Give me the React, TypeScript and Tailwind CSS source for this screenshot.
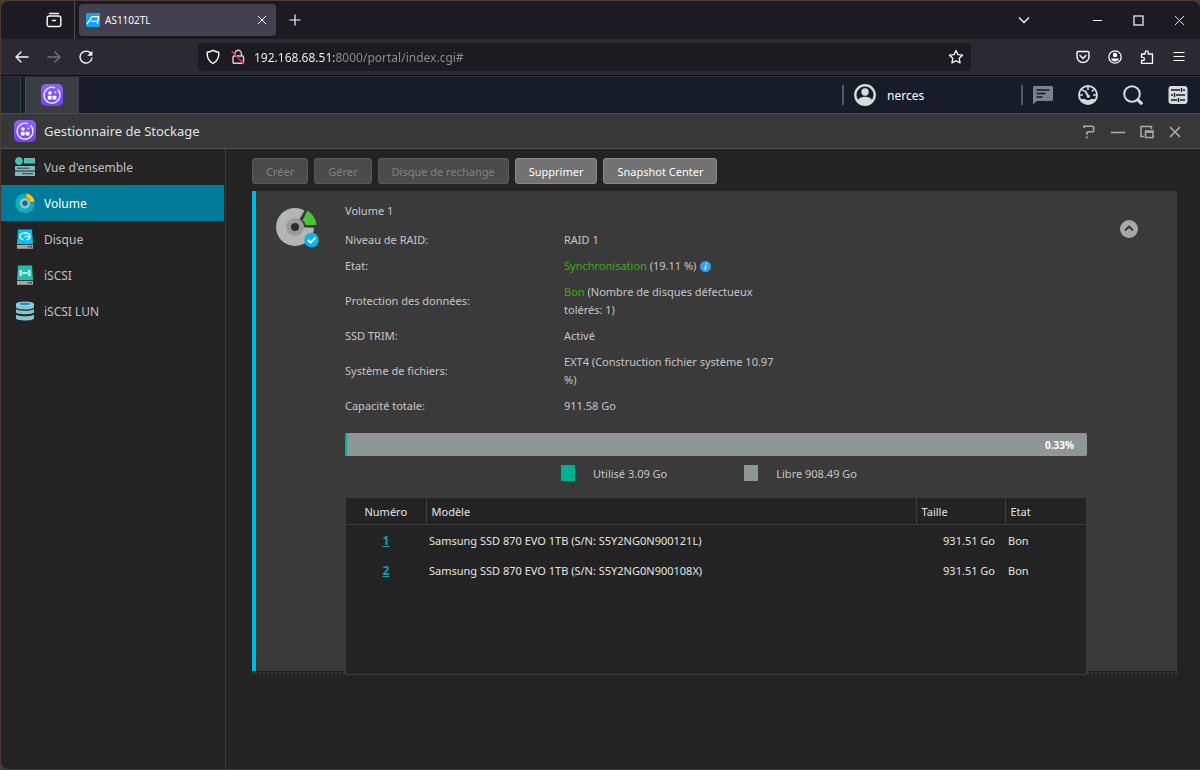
import { useState } from 'react'
import type { ReactNode } from 'react'

interface NavItem {
  id: string
  label: string
  icon: ReactNode
}

interface Disk {
  id: number
  model: string
  size: string
  state: string
}

const disks: Disk[] = [
  { id: 1, model: 'Samsung SSD 870 EVO 1TB (S/N: S5Y2NG0N900121L)', size: '931.51 Go', state: 'Bon' },
  { id: 2, model: 'Samsung SSD 870 EVO 1TB (S/N: S5Y2NG0N900108X)', size: '931.51 Go', state: 'Bon' },
]

const actions = [
  { label: 'Créer', disabled: true },
  { label: 'Gérer', disabled: true },
  { label: 'Disque de rechange', disabled: true },
  { label: 'Supprimer', disabled: false },
  { label: 'Snapshot Center', disabled: false },
]

function StorageIcon() {
  return (
    <svg viewBox="0 0 22 22" className="size-[22px] shrink-0">
      <defs>
        <linearGradient id="storage" x1="0" y1="0" x2="0" y2="1">
          <stop offset="0" stopColor="#8a63f5" />
          <stop offset="1" stopColor="#6f45ee" />
        </linearGradient>
      </defs>
      <rect width="22" height="22" rx="5" fill="url(#storage)" />
      <path d="M13.5 3.6A8 8 0 1 0 19 11a8 8 0 0 0-2-5.2" fill="none" stroke="#f1ecff" strokeWidth="1.4" strokeLinecap="round" />
      <circle cx="9" cy="9" r="1.8" fill="#fff" />
      <rect x="13.5" y="7.5" width="1.8" height="1.8" rx=".5" fill="#fff" />
      <rect x="6.8" y="11.8" width="3.9" height="3.7" rx=".7" fill="#fff" />
      <rect x="11.6" y="11.8" width="3.9" height="3.7" rx=".7" fill="#fff" />
    </svg>
  )
}

function OverviewIcon() {
  return (
    <svg viewBox="0 0 20 20" className="size-5">
      <circle cx="4" cy="4" r="3.4" fill="#22d3b0" stroke="#7fb0b8" strokeWidth="1" />
      <rect x="9.5" y="1.5" width="10" height="4.5" fill="#22d3b0" stroke="#7fb0b8" />
      <rect x="0" y="9" width="20" height="4.5" rx=".6" fill="#8ab6bf" />
      <rect x="2" y="10.7" width="12" height="1" fill="#26424a" />
      <rect x="0" y="14.5" width="20" height="4.5" rx=".6" fill="#8ab6bf" />
      <rect x="7" y="16.2" width="11" height="1" fill="#26424a" />
    </svg>
  )
}

function VolumeIcon() {
  return (
    <svg viewBox="0 0 20 20" className="size-5">
      <circle cx="10" cy="10.3" r="9.7" fill="#00b4c0" />
      <path d="M10.8 0A9.7 9.7 0 0 1 20 9.4h-4.8A5 5 0 0 0 10.8 5z" fill="#ffc400" stroke="#007a99" strokeWidth=".8" />
      <circle cx="10" cy="10.3" r="4" fill="#007a99" stroke="#a9bcc4" strokeWidth="2.6" />
    </svg>
  )
}

function DiskIcon() {
  return (
    <svg viewBox="0 0 20 20" className="size-5">
      <path d="M3 .5h14l1 14.5H2z" fill="#00c3f5" />
      <rect x="2" y="15.8" width="16" height="4" fill="#a5a5a5" />
      <path d="M13 17h1.5v1.5H13zM15.5 17H17v1.5h-1.5z" fill="#333" />
      <path d="M8.5 10.7C6 10.5 5 9 5 7.500 5 5.500 7 4 10 4s5 1.500 5 3.500-1.500 3-3.500 3M14 7.500H9.500" fill="none" stroke="#e8fbff" strokeWidth="1.3" />
    </svg>
  )
}

function IscsiIcon() {
  return (
    <svg viewBox="0 0 20 20" className="size-5">
      <path d="M3 .5h14l1 14.5H2z" fill="#1fbfb0" />
      <rect x="2" y="15.8" width="16" height="4" fill="#a5a5a5" />
      <path d="M13 17h1.500v1.500H13zM15.500 17H17v1.500h-1.500z" fill="#333" />
      <path d="M7 6H5.200v4H7M13 6h1.800v4H13M6.500 8h7" fill="none" stroke="#e6fffb" strokeWidth="1.3" />
    </svg>
  )
}

function LunIcon() {
  return (
    <svg viewBox="0 0 20 20" className="size-5">
      <path d="M1 3v3.200c0 3 18 3 18 0V3z" fill="#86c3cb" />
      <ellipse cx="10" cy="3" rx="9" ry="2.500" fill="#9ed3da" />
      <ellipse cx="10" cy="2.900" rx="6" ry="1.300" fill="#2f86c6" />
      <path d="M1 8c2 2.300 16 2.300 18 0v3.300c0 2.600-18 2.600-18 0zM1 13.500c2 2.300 16 2.300 18 0v3.800c0 3-18 3-18 0z" fill="#86c3cb" />
    </svg>
  )
}

const navItems: NavItem[] = [
  { id: 'overview', label: "Vue d'ensemble", icon: <OverviewIcon /> },
  { id: 'volume', label: 'Volume', icon: <VolumeIcon /> },
  { id: 'disk', label: 'Disque', icon: <DiskIcon /> },
  { id: 'iscsi', label: 'iSCSI', icon: <IscsiIcon /> },
  { id: 'lun', label: 'iSCSI LUN', icon: <LunIcon /> },
]

function IconButton({ label, children, className = '' }: { label: string; children: ReactNode; className?: string }) {
  return (
    <button aria-label={label} className={`flex shrink-0 items-center justify-center ${className}`}>
      {children}
    </button>
  )
}

function TabBar() {
  return (
    <div className="flex h-[38px] items-center rounded-t-lg bg-[#1c1b22] text-[#fbfbfe]">
      <div className="flex h-full w-[74px] items-center justify-end border-r border-[#4a4954] pr-3">
        <IconButton label="Firefox View">
          <svg viewBox="0 0 16 16" className="size-4" fill="none" stroke="currentColor" strokeWidth="1.4">
            <path d="M3.500 1.500h9" strokeLinecap="round" />
            <rect x="1.200" y="4" width="13.600" height="10.500" rx="2" />
            <path d="M6.500 8.500h3" strokeLinecap="round" />
          </svg>
        </IconButton>
      </div>
      <div className="ml-1 flex h-8 w-[197px] items-center rounded bg-[#42414d] pl-[7px] shadow">
        <svg viewBox="0 0 14 14" className="size-3.5">
          <rect width="14" height="14" rx="1" fill="#18a0f5" />
          <path d="M.8 11.200 6 3.700h6.700L11.300 11.200M4.600 8.400h6.800" fill="none" stroke="#fff" strokeWidth="1.300" />
        </svg>
        <span className="ml-[5px] grow text-[10px]">AS1102TL</span>
        <IconButton label="Fermer l'onglet" className="mr-[9px]">
          <svg viewBox="0 0 10 10" className="size-2.5" stroke="currentColor" strokeWidth="1">
            <path d="m1 1 8 8M9 1 1 9" />
          </svg>
        </IconButton>
      </div>
      <IconButton label="Nouvel onglet" className="ml-[13px]">
        <svg viewBox="0 0 12 12" className="size-3" stroke="currentColor" strokeWidth="1.200">
          <path d="M6 .5v11M.5 6h11" />
        </svg>
      </IconButton>
      <IconButton label="Lister les onglets" className="ml-auto">
        <svg viewBox="0 0 12 12" className="size-3" fill="none" stroke="currentColor" strokeWidth="1.300">
          <path d="m1 3.500 5 5 5-5" />
        </svg>
      </IconButton>
      <IconButton label="Réduire" className="ml-[62px]">
        <svg viewBox="0 0 11 11" className="size-[11px]" stroke="currentColor">
          <path d="M1 5.500h9" />
        </svg>
      </IconButton>
      <IconButton label="Agrandir" className="ml-[30px]">
        <svg viewBox="0 0 11 11" className="size-[11px]" fill="none" stroke="currentColor" strokeWidth="1.200">
          <rect x="1" y="1" width="9" height="9" />
        </svg>
      </IconButton>
      <IconButton label="Fermer" className="mr-[15px] ml-[30px]">
        <svg viewBox="0 0 11 11" className="size-[11px]" stroke="currentColor" strokeWidth=".9">
          <path d="m1 1 9 9M10 1l-9 9" />
        </svg>
      </IconButton>
    </div>
  )
}

function AddressBar() {
  return (
    <div className="flex h-9 items-center bg-[#2b2a33] text-[#fbfbfe]">
      <IconButton label="Précédent" className="ml-3.5">
        <svg viewBox="0 0 14 14" className="size-3.5" fill="none" stroke="currentColor" strokeWidth="1.400" strokeLinecap="round" strokeLinejoin="round">
          <path d="M13 7H1M6 2 1 7l5 5" />
        </svg>
      </IconButton>
      <IconButton label="Suivant" className="ml-[18px] text-[#74737c]">
        <svg viewBox="0 0 14 14" className="size-3.5" fill="none" stroke="currentColor" strokeWidth="1.400" strokeLinecap="round" strokeLinejoin="round">
          <path d="M1 7h12M8 2l5 5-5 5" />
        </svg>
      </IconButton>
      <IconButton label="Actualiser" className="ml-[18px]">
        <svg viewBox="0 0 14 14" className="size-3.5" fill="none" stroke="currentColor" strokeWidth="1.300" strokeLinecap="round">
          <path d="M13 8A6 6 0 1 1 11.500 3" />
          <path d="M13.300.8v5h-5z" fill="currentColor" stroke="none" />
        </svg>
      </IconButton>
      <div className="ml-[105px] flex h-7 min-w-0 grow items-center rounded bg-[#1c1b22] px-[7px]">
        <svg viewBox="0 0 16 16" className="size-4 shrink-0" fill="none" stroke="currentColor" strokeWidth="1.400">
          <path d="M8 1.300c2 1.200 3.800 1.600 5.800 1.900.300 5-1 8.800-5.800 11.300C3.200 12 1.900 8.200 2.200 3.200 4.200 2.900 6 2.500 8 1.300z" strokeLinejoin="round" />
        </svg>
        <svg viewBox="0 0 16 16" className="ml-[9px] size-4 shrink-0" fill="none" stroke="#d0d0d4" strokeWidth="1.400">
          <path d="M5 7V4.500a3.200 3.200 0 0 1 6.400 0V7" />
          <rect x="3" y="7" width="10.500" height="7.300" rx="1" />
          <path d="m1.500 2 12.500 13" stroke="#e22850" strokeWidth="1.600" />
        </svg>
        <input
          aria-label="Adresse"
          defaultValue="192.168.68.51:8000/portal/index.cgi#"
          className="ml-2 min-w-0 grow bg-[linear-gradient(to_right,#fbfbfe_80px,#8f8e98_80px)] bg-clip-text pt-0.5 text-xs text-transparent caret-white outline-none"
        />
        <IconButton label="Marquer cette page">
          <svg viewBox="0 0 16 16" className="size-4" fill="none" stroke="currentColor" strokeWidth="1.300" strokeLinejoin="round">
            <path d="m8 1.500 2 4.100 4.600.6-3.400 3.100.9 4.600L8 11.700l-4.100 2.200.9-4.600L1.400 6.200 6 5.600z" />
          </svg>
        </IconButton>
      </div>
      <div className="mr-3.5 ml-[105px] flex items-center gap-[18px]">
        <IconButton label="Pocket">
          <svg viewBox="0 0 14 14" className="size-3.5" fill="none" stroke="currentColor" strokeWidth="1.400" strokeLinecap="round">
            <path d="M2 1.500h10a1 1 0 0 1 1 1v4a6 6 0 0 1-12 0v-4a1 1 0 0 1 1-1z" />
            <path d="m4 5.500 3 3 3-3" />
          </svg>
        </IconButton>
        <IconButton label="Compte">
          <svg viewBox="0 0 14 14" className="size-3.5" fill="currentColor">
            <circle cx="7" cy="7" r="6.200" fill="none" stroke="currentColor" strokeWidth="1.300" />
            <circle cx="7" cy="5" r="2.200" />
            <path d="M3 8.500h8c-.5 2-2 3-4 3s-3.500-1-4-3z" />
          </svg>
        </IconButton>
        <IconButton label="Extensions">
          <svg viewBox="0 0 14 14" className="size-3.5" fill="none" stroke="currentColor" strokeWidth="1.300" strokeLinejoin="round">
            <path d="M1.500 4h3.700V2.300a1.500 1.500 0 0 1 3 0V4H12.500v9.300h-11V10.500h1.300a1.500 1.500 0 0 0 0-3.200H1.500z" />
          </svg>
        </IconButton>
        <IconButton label="Menu">
          <svg viewBox="0 0 14 14" className="size-3.5" stroke="currentColor" strokeWidth="1.200">
            <path d="M1.500 2.500h11M1.500 6.500h11M1.500 10.500h11" />
          </svg>
        </IconButton>
      </div>
    </div>
  )
}

function Taskbar() {
  return (
    <div className="flex h-[38px] items-center border-y border-t-[#2a3038] border-b-[#4a4b4d] bg-[#161d28] text-[#d8dadc]">
      <div className="h-full w-5 border-r border-[#3a4148] bg-[#1f272f]" />
      <button aria-label="Gestionnaire de Stockage" className="ml-1 flex h-full w-[54px] items-center justify-center border-l border-[#4b4f55] bg-[#3a3e44] pr-0.5">
        <StorageIcon />
      </button>
      <div className="ml-auto flex h-5 w-[179px] items-center border-l-2 border-[#565a60] pl-2.5">
        <svg viewBox="0 0 22 22" className="size-[22px]">
          <circle cx="11" cy="11" r="9.700" fill="none" stroke="currentColor" strokeWidth="2.400" />
          <circle cx="11" cy="8" r="3.700" fill="currentColor" />
          <path d="M3.500 17c1-3 4-4.300 7.500-4.300s6.500 1.300 7.500 4.300a9.500 9.500 0 0 1-15 0z" fill="currentColor" />
        </svg>
        <span className="ml-[11px] pt-0.5 text-xs text-white">nerces</span>
      </div>
      <div className="mr-3 flex h-5 items-center gap-[25px] border-l-2 border-[#565a60] pl-2.5">
        <IconButton label="Notifications">
          <svg viewBox="0 0 20 20" className="size-5" fill="#7b818b">
            <path d="M1.500 1h17A1.500 1.500 0 0 1 20 2.500v12a1.500 1.500 0 0 1-1.500 1.500H4l-4 3.500v-17A1.500 1.500 0 0 1 1.500 1z" />
            <path d="M3.500 5h13M3.500 8.500h9M3.500 12h6" stroke="#161d28" strokeWidth="1.500" />
          </svg>
        </IconButton>
        <IconButton label="Moniteur d'activité">
          <svg viewBox="0 0 20 20" className="size-5" fill="none" stroke="currentColor">
            <circle cx="10" cy="10" r="9" strokeWidth="1.900" />
            <path d="M10 1.500V5M2 10h3M15 10h3M4.200 4.700l2 1.800M15.800 4.700l-2 1.800" strokeWidth="1.600" />
            <path d="M7 5.500 10 11" strokeWidth="2" />
            <path d="M3 14.500h4.500l1 1h3l1-1H17A8.500 8.500 0 0 1 3 14.500z" fill="currentColor" />
            <circle cx="10.300" cy="11.300" r="1.200" fill="currentColor" />
          </svg>
        </IconButton>
        <IconButton label="Rechercher">
          <svg viewBox="0 0 20 20" className="size-5" fill="none" stroke="currentColor" strokeWidth="2">
            <circle cx="9" cy="9" r="7.800" />
            <path d="m14.800 14.800 3.400 3.400" strokeWidth="3.200" strokeLinecap="round" />
          </svg>
        </IconButton>
        <IconButton label="Préférences">
          <svg viewBox="0 0 20 20" className="size-5">
            <rect x=".5" y="1" width="19" height="18" rx="3" fill="currentColor" />
            <path d="M3 5h9M15 5h2M3 10h2M8 10h9M3 15h6M12 15h5M13.500 3v4M6.500 8v4M10.500 13v4" stroke="#161d28" strokeWidth="1.400" />
          </svg>
        </IconButton>
      </div>
    </div>
  )
}

function TitleBar() {
  return (
    <div className="flex h-[35px] items-center border-b border-[#505254] bg-[#37383a] pr-[19px] pl-[13px] text-[#a9abad]">
      <StorageIcon />
      <h1 className="ml-2 text-[13px] text-[#e2e2e2]">Gestionnaire de Stockage</h1>
      <div className="ml-auto flex items-center gap-[15px] pt-0.5">
        <IconButton label="Aide">
          <svg viewBox="0 0 14 14" className="size-3.5" fill="none" stroke="currentColor" strokeWidth="1.600">
            <path d="M2 3V1.300h8.500a1.200 1.200 0 0 1 1.200 1.200v3a1.200 1.200 0 0 1-1.200 1.200H6a1.200 1.200 0 0 0-1.200 1.200v2M4.800 11.500v1.800" />
          </svg>
        </IconButton>
        <IconButton label="Réduire la fenêtre">
          <svg viewBox="0 0 14 14" className="size-3.5" stroke="currentColor" strokeWidth="1.600">
            <path d="M0 7.500h14" />
          </svg>
        </IconButton>
        <IconButton label="Restaurer la fenêtre">
          <svg viewBox="0 0 14 14" className="size-3.5" fill="none" stroke="currentColor" strokeWidth="1.500">
            <path d="M4 11.500H1V1.500h10.500V4" />
            <rect x="5.500" y="6" width="7.500" height="6.500" />
            <path d="M5.500 7.200H13" />
          </svg>
        </IconButton>
        <IconButton label="Fermer la fenêtre">
          <svg viewBox="0 0 12 12" className="size-3" stroke="currentColor" strokeWidth="1.600">
            <path d="m1 1 10 10M11 1 1 11" />
          </svg>
        </IconButton>
      </div>
    </div>
  )
}

function DetailRow({ label, children }: { label: string; children: ReactNode }) {
  return (
    <div className="flex items-center py-1">
      <dt className="w-[219px] shrink-0">{label}</dt>
      <dd>{children}</dd>
    </div>
  )
}

function DiskTable() {
  return (
    <div className="-mb-1 min-h-[178px] border border-[#3e3e3e] bg-[#232323] text-[#e4e4e4]">
      <table className="w-full table-fixed">
        <colgroup>
          <col className="w-20" />
          <col />
          <col className="w-[89px]" />
          <col className="w-[81px]" />
        </colgroup>
        <thead>
          <tr className="h-[26px] border-b border-[#3e3e3e] text-left">
            <th className="border-r border-[#3e3e3e] pt-0.5 text-center font-normal">Numéro</th>
            <th className="border-r border-[#3e3e3e] pt-0.5 pl-[5px] font-normal">Modèle</th>
            <th className="border-r border-[#3e3e3e] pt-0.5 pl-[5px] font-normal">Taille</th>
            <th className="pt-0.5 pl-[5px] font-normal">Etat</th>
          </tr>
        </thead>
        <tbody>
          {disks.map((disk) => (
            <tr key={disk.id} className="h-[30px]">
              <td className="pt-1 text-center">
                <a href="#" className="text-xs font-bold text-[#1f9ab0] underline">
                  {disk.id}
                </a>
              </td>
              <td className="pt-1 pl-[3px]">{disk.model}</td>
              <td className="pt-1 pr-2.5 text-right">{disk.size}</td>
              <td className="pt-1 pl-[3px]">{disk.state}</td>
            </tr>
          ))}
        </tbody>
      </table>
    </div>
  )
}

function VolumePanel() {
  const [open, setOpen] = useState(true)
  const usedPercent = 0.33

  return (
    <div className="border-b-2 border-dotted border-[#3a3a3a] pb-px">
      <section className="flex items-start border-l-4 border-[#00bcd9] bg-[#3a3a3a] pr-[39px] pl-5 text-[11px] text-[#c6c6c6]">
        <svg viewBox="0 0 44 44" className="mt-4 size-11 shrink-0">
          <circle cx="19" cy="20" r="19" fill="#b4b6b5" />
          <path d="M19 20 30 1h13v20z" fill="#3a3a3a" />
          <path d="M26.500 13.500 31.500 3.500c5 3.500 8.500 8.500 9 14.500H29.500c-.300-2-1.500-3.500-3-4.500z" fill="#4fc338" />
          <circle cx="19" cy="20" r="9" fill="#9a9c9b" />
          <circle cx="19" cy="20" r="4" fill="#2c2c2c" />
          <circle cx="35.500" cy="33" r="7.300" fill="#0fb3ea" />
          <path d="m32 33 2.700 2.700 4.800-5" fill="none" stroke="#fff" strokeWidth="1.900" />
        </svg>
        <div className="ml-[25px] min-w-0 grow pt-2.5">
          <h2 className="py-px">Volume 1</h2>
          {open && (
            <>
              <dl className="pt-1.5">
                <DetailRow label="Niveau de RAID:">RAID 1</DetailRow>
                <DetailRow label="Etat:">
                  <div className="flex items-center">
                    <span>
                      <span className="text-[#38ad0e]">Synchronisation</span> (19.11 %)
                    </span>
                    <svg viewBox="0 0 11 11" className="ml-1 size-[11px]">
                      <circle cx="5.500" cy="5.500" r="5.500" fill="#399de8" />
                      <path d="M6.300 2v1.300M5.900 4.400 5.100 8.700" stroke="#fff" strokeWidth="1.300" />
                    </svg>
                  </div>
                </DetailRow>
                <DetailRow label="Protection des données:">
                  <span className="text-[#38ad0e]">Bon</span> (Nombre de disques défectueux
                  <br />
                  tolérés: 1)
                </DetailRow>
                <DetailRow label="SSD TRIM:">Activé</DetailRow>
                <DetailRow label="Système de fichiers:">
                  EXT4 (Construction fichier système 10.97
                  <br />
                  %)
                </DetailRow>
                <DetailRow label="Capacité totale:">911.58 Go</DetailRow>
              </dl>
              <div className="mt-3.5 flex h-[23px] items-center overflow-hidden rounded-xs bg-[#8f9698]">
                <div className="h-full bg-[#00b294]" style={{ width: `${usedPercent}%` }} />
                <span className="ml-auto pr-[13px] text-[10px] font-bold text-white">{usedPercent}%</span>
              </div>
              <div className="mt-[7px] mb-3.5 flex items-center justify-center gap-[77px] pr-3.5">
                <div className="flex items-center gap-[18px]">
                  <span className="h-4 w-3.5 bg-[#00b294]" />
                  <span className="pt-0.5">Utilisé 3.09 Go</span>
                </div>
                <div className="flex items-center gap-[18px]">
                  <span className="h-4 w-3.5 bg-[#8f9698]" />
                  <span className="pt-0.5">Libre 908.49 Go</span>
                </div>
              </div>
              <DiskTable />
            </>
          )}
        </div>
        <button
          aria-label="Afficher ou masquer les détails"
          aria-expanded={open}
          onClick={() => setOpen(!open)}
          className="mt-[29px] ml-[33px] flex size-[18px] shrink-0 items-center justify-center rounded-full bg-[#a8a8a8]"
        >
          <svg viewBox="0 0 10 10" className="size-2.5" fill="none" stroke="#333" strokeWidth="1.800">
            <path d="m1 6.500 4-4 4 4" />
          </svg>
        </button>
      </section>
    </div>
  )
}

export default function App() {
  const [selected, setSelected] = useState('volume')

  return (
    <div className="flex min-h-screen flex-col bg-[#4a3a34] pt-px pl-px font-['Noto_Sans','Liberation_Sans',sans-serif] text-xs leading-[18px]">
      <TabBar />
      <AddressBar />
      <div className="h-px bg-[#0c0c0f]" />
      <Taskbar />
      <TitleBar />
      <div className="flex grow rounded-bl-lg border-b border-[#3a3a3a] bg-[#232323]">
        <nav className="w-[225px] shrink-0 border-r border-[#3e3e3e]">
          {navItems.map((item) => (
            <button
              key={item.id}
              onClick={() => setSelected(item.id)}
              className={`flex h-9 w-[223px] items-center gap-[9px] pl-3.5 text-xs ${
                item.id === selected ? 'bg-[#007a99] text-white' : 'text-[#c0c0c0]'
              }`}
            >
              {item.icon}
              <span className="pt-0.5">{item.label}</span>
            </button>
          ))}
        </nav>
        <main className="min-w-0 grow pt-[9px] pr-[23px] pl-[26px]">
          <div className="mb-[7px] flex gap-1.5">
            {actions.map((action) => (
              <button
                key={action.label}
                disabled={action.disabled}
                className={`h-[26px] rounded-[3px] border px-[13px] pt-0.5 text-[11px] ${
                  action.disabled
                    ? 'border-[#5a5a5a] bg-[#4b4b4b] text-[#828282]'
                    : 'border-[#8a8a8a] bg-[#727272] text-white'
                }`}
              >
                {action.label}
              </button>
            ))}
          </div>
          <VolumePanel />
        </main>
      </div>
    </div>
  )
}
